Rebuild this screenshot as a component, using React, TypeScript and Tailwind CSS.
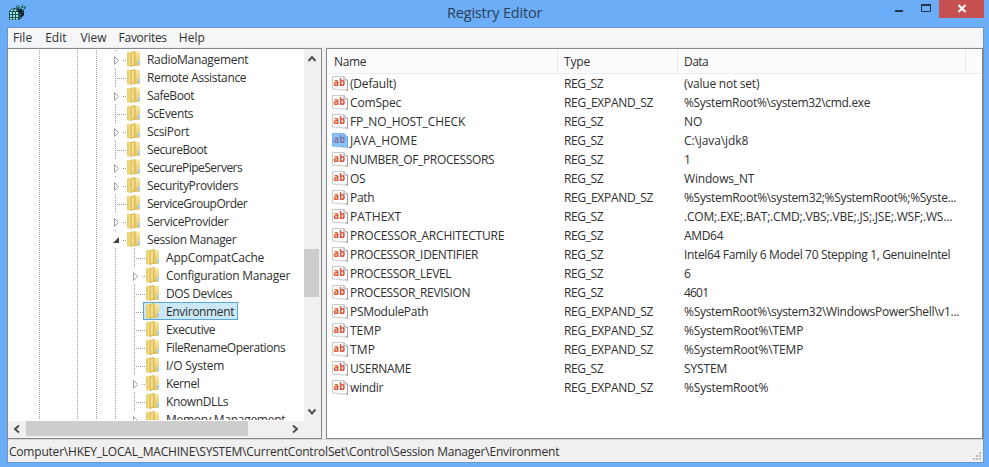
import { useLayoutEffect, useRef, useState } from "react";

type TextProps = { text: string; w?: number; className?: string };

// Text tracked so that its ink ends at w, less the last glyph's side bearing.
function Label({ text, w, className = "" }: TextProps) {
  const ref = useRef<HTMLSpanElement>(null);
  const [spacing, setSpacing] = useState(0);
  useLayoutEffect(() => {
    if (ref.current && w) {
      const natural = ref.current.getBoundingClientRect().width;
      setSpacing((w - 0.8 - natural) / text.length);
    }
  }, [text, w]);
  return (
    <span ref={ref} className={"shrink-0 whitespace-pre " + className} style={{ letterSpacing: spacing + "px" }}>
      {text}
    </span>
  );
}

type Node = { name: string; w: number; level: 1 | 2; state?: "closed" | "open"; selected?: boolean };

const nodes: Node[] = [
  { name: "RadioManagement", w: 102, level: 1, state: "closed" },
  { name: "Remote Assistance", w: 100, level: 1 },
  { name: "SafeBoot", w: 48, level: 1, state: "closed" },
  { name: "ScEvents", w: 47, level: 1 },
  { name: "ScsiPort", w: 43, level: 1, state: "closed" },
  { name: "SecureBoot", w: 61, level: 1 },
  { name: "SecurePipeServers", w: 96, level: 1, state: "closed" },
  { name: "SecurityProviders", w: 92, level: 1, state: "closed" },
  { name: "ServiceGroupOrder", w: 101, level: 1 },
  { name: "ServiceProvider", w: 82, level: 1, state: "closed" },
  { name: "Session Manager", w: 90, level: 1, state: "open" },
  { name: "AppCompatCache", w: 99, level: 2 },
  { name: "Configuration Manager", w: 125, level: 2, state: "closed" },
  { name: "DOS Devices", w: 67, level: 2 },
  { name: "Environment", w: 69, level: 2, selected: true },
  { name: "Executive", w: 50, level: 2 },
  { name: "FileRenameOperations", w: 120, level: 2 },
  { name: "I/O System", w: 59, level: 2 },
  { name: "Kernel", w: 34, level: 2, state: "closed" },
  { name: "KnownDLLs", w: 63, level: 2 },
  { name: "Memory Management", w: 120, level: 2, state: "closed" },
];

const SZ = "REG_SZ";
const EX = "REG_EXPAND_SZ";
const values: [string, number, string, string, number][] = [
  ["(Default)", 47, SZ, "(value not set)", 76],
  ["ComSpec", 52, EX, "%SystemRoot%\\system32\\cmd.exe", 187],
  ["FP_NO_HOST_CHECK", 116, SZ, "NO", 19],
  ["JAVA_HOME", 68, SZ, "C:\\java\\jdk8", 65],
  ["NUMBER_OF_PROCESSORS", 145, SZ, "1", 7],
  ["OS", 16, SZ, "Windows_NT", 71],
  ["Path", 25, EX, "%SystemRoot%\\system32;%SystemRoot%;%Syste...", 273],
  ["PATHEXT", 52, SZ, ".COM;.EXE;.BAT;.CMD;.VBS;.VBE;.JS;.JSE;.WSF;.WS...", 269],
  ["PROCESSOR_ARCHITECTURE", 155, SZ, "AMD64", 40],
  ["PROCESSOR_IDENTIFIER", 129, SZ, "Intel64 Family 6 Model 70 Stepping 1, GenuineIntel", 267],
  ["PROCESSOR_LEVEL", 102, SZ, "6", 7],
  ["PROCESSOR_REVISION", 121, SZ, "4601", 25],
  ["PSModulePath", 79, EX, "%SystemRoot%\\system32\\WindowsPowerShell\\v1...", 276],
  ["TEMP", 32, EX, "%SystemRoot%\\TEMP", 120],
  ["TMP", 26, EX, "%SystemRoot%\\TEMP", 120],
  ["USERNAME", 62, SZ, "SYSTEM", 44],
  ["windir", 34, EX, "%SystemRoot%", 85],
];

const dotted = "bg-[repeating-linear-gradient(to_bottom,#9b9b9b_0px,#9b9b9b_1px,transparent_1px,transparent_2px)]";

function Guide({ className }: { className: string }) {
  return <div className={"h-[18px] w-px shrink-0 " + dotted + " " + className} />;
}

function Folder() {
  return (
    <svg width="14" height="16" viewBox="0 0 14 16" className="shrink-0">
      <defs>
        <linearGradient id="folderFront" x1="0" x2="1">
          <stop offset="0" stopColor="#e6cb69" />
          <stop offset="1" stopColor="#f5e296" />
        </linearGradient>
        <linearGradient id="folderBack" x1="0" x2="0" y1="0" y2="1">
          <stop offset="0" stopColor="#f6e8a6" />
          <stop offset="1" stopColor="#e3c563" />
        </linearGradient>
      </defs>
      <path d="M5 .6h6.500L13 2v12.500l-.8.5H5z" fill="url(#folderBack)" />
      <path d="M0 1.500 4 .6v14.800H.6L0 14.800z" fill="url(#folderFront)" />
      <path d="M3.600 1.600 7.800 0v14L4.400 16l-.8-.6z" fill="#d0ac40" />
      <path d="M4.500 2 7.200.9v12.700l-2.700 1.500z" fill="#f3dd86" />
      <path d="M8.300 1v13.500" stroke="#dcbc58" strokeWidth=".8" />
      <path d="M11 9.500h2.200v4.800H11z" fill="#edf3f5" />
      <path d="M12 10v4" stroke="#5fa6da" strokeWidth="1" />
    </svg>
  );
}

function Connector({ state }: { state?: "closed" | "open" }) {
  return (
    <svg width="14" height="18" viewBox="0 0 14 18" className="shrink-0 overflow-visible">
      {!state && <path d="M5 .5h1M5 2.500h1M5 4.500h1M5 6.500h1M5 8.500h1M5 10.500h1M5 12.500h1M5 14.500h1M5 16.500h1M5 18.500h1" stroke="#9b9b9b" />}
      {!state && <path d="M7 10.500h10" stroke="#9b9b9b" strokeDasharray="1 1" />}
      {state && <path d="M13 10.500h4M5 .5h1" stroke="#9b9b9b" strokeDasharray="1 1" />}
      {state === "closed" && <path d="M4.500 6.500v8l4-4z" fill="#fff" stroke="#a2a2a2" />}
      {state === "open" && <path d="M9 7v6H3z" fill="#404040" />}
    </svg>
  );
}

function TreeRow({ node }: { node: Node }) {
  const box = node.selected ? "border-[#5aa7dc] bg-[#cbe8f6]" : "border-transparent";
  return (
    <div className="flex h-[18px] shrink-0 items-center">
      <Guide className="ml-[31px]" />
      <Guide className="ml-[37px]" />
      <Guide className="ml-[18px]" />
      {node.level === 2 && <Guide className="ml-[18px]" />}
      <div className="w-[13px] shrink-0" />
      <Connector state={node.state} />
      <div className={"flex h-[18px] shrink-0 items-center border pr-[3px] pl-[2px] " + box}>
        <Folder />
        <Label text={node.name} w={node.w} className="ml-[6px] pt-[2px] leading-[16px]" />
      </div>
    </div>
  );
}

function StringIcon({ selected }: { selected: boolean }) {
  return (
    <svg width="16" height="16" viewBox="0 0 16 16" className="mt-[2px] shrink-0 self-start">
      <path
        d="M.5 .5h11.500l3.500 3.500v10.500l-2-1-1.500 1-2-1-1.500.5-2-1-1.500 1-1.500-1-1.500.5-1.500-.5z"
        fill={selected ? "#8cc4fa" : "#fcfcfc"}
        stroke={selected ? "#73b0ee" : "#c9c9c9"}
      />
      <path d="M12 .5V4h3.500v10.500l-2-1" fill="none" stroke={selected ? "#6ba7e3" : "#a3a3a3"} />
      <text x="1.600" y="9.500" fontSize="10" fontWeight="700" textLength="11.500" lengthAdjust="spacingAndGlyphs" fill={selected ? "#8272a8" : "#d9502f"} fontFamily="Open Sans">
        ab
      </text>
    </svg>
  );
}

function RegistryIcon() {
  return (
    <svg width="17" height="16" viewBox="0 0 17 16">
      <path d="M0 6.500 3 3.500 8 3l5 1v8l-3 3H0z" fill="#1d4f54" />
      <path d="M1 7h2v2H1zM4 7h2v2H4zM7 7h2v2H7zM1 10h2v2H1zM4 10h2v2H4zM7 10h2v2H7zM1 13h2v1.500H1zM4 13h2v1.500H4zM7 13h2v1.500H7z" fill="#9beae6" />
      <path d="m1.500 6 1.500-1.500h1.500L3.500 6zM4.800 6l1-1.500h1.700L7 6z" fill="#b9f5ef" />
      <path d="m7 1.500 2-1.500 2 1.500L10 4H8zM12 2l2-2 3 1.500-1 2.500-3 1z" fill="#1b5159" />
      <path d="M8.500 1h1.200v1.200H8.500zM14 1h1.700v1H14zM13 2.800h2v1h-2z" fill="#7de8e6" />
      <path d="m8.500 6 3-2 1.500 2-2 1.800zM13 5.500h2V10l-4 4V9z" fill="#07191c" />
      <path d="M11.500 9v1M11.500 11.500v1M13.500 7v1" stroke="#46b4b8" />
    </svg>
  );
}

function Chevron({ d }: { d: string }) {
  return (
    <svg width="10" height="10" viewBox="0 0 10 10">
      <path d={d} fill="none" stroke="#505050" strokeWidth="2" />
    </svg>
  );
}

export default function App() {
  return (
    <div className="flex h-[467px] w-[989px] flex-col overflow-hidden bg-[#6badf6] font-['Open_Sans',sans-serif] text-[12px] text-[#2f2f2f]">
      <header className="flex h-[27px] shrink-0 items-start">
        <div className="w-[438px] pt-[5px] pl-[9px]">
          <RegistryIcon />
        </div>
        <Label text="Registry Editor" w={96} className="ml-[9px] pt-[1px] text-[14.5px] leading-[24px] text-[#2b4059]" />
        <div className="ml-auto flex h-[18px]">
          <svg width="44" height="18" viewBox="0 0 44 18">
            <path d="M0 10h8v2H0z" fill="#243548" />
            <path d="M26.500 5v6.500h9V5" fill="none" stroke="#243548" />
            <path d="M26 4h10v2H26z" fill="#243548" />
          </svg>
          <div className="mr-[5px] flex w-[45px] justify-center bg-[#c75050]">
            <svg width="10" height="18" viewBox="0 0 10 18">
              <path d="m1.500 5 7 7M8.500 5l-7 7" stroke="#fff" strokeWidth="2" />
            </svg>
          </div>
        </div>
      </header>
      <div className="mr-[5px] ml-[7px] flex h-[436px] flex-col border border-[#6898cf] bg-[#f0f0f0]">
        <nav className="flex h-[20px] shrink-0 items-center border-b border-[#ececec] bg-[#f5f6f7] pl-[5px] leading-[19px]">
          <Label text="File" w={20} />
          <Label text="Edit" w={22} className="ml-[13px]" />
          <Label text="View" w={27} className="ml-[14px]" />
          <Label text="Favorites" w={49} className="ml-[12px]" />
          <Label text="Help" w={27} className="ml-[12px]" />
        </nav>
        <main className="-mx-px flex h-[391px] shrink-0">
          <section className="flex w-[315px] flex-col border border-[#828790] bg-white">
            <div className="flex h-[372px] shrink-0">
              <div className="flex w-[296px] flex-col overflow-hidden pt-px pb-px">
                <div className="flex h-[370px] flex-col overflow-hidden">
                  {nodes.map((n) => (
                    <TreeRow key={n.name} node={n} />
                  ))}
                </div>
              </div>
              <div className="flex w-[17px] flex-col items-center bg-[#f0f0f0] pr-[2px]">
                <div className="h-[200px] pt-[5px]">
                  <Chevron d="m1.500 7 3.500-4 3.500 4" />
                </div>
                <div className="h-[48px] w-[15px] bg-[#cdcdcd]" />
                <div className="mt-auto h-[15px]">
                  <Chevron d="m1.500 3.500 3.500 4 3.500-4" />
                </div>
              </div>
            </div>
            <div className="flex h-[17px] items-start bg-[#f0f0f0]">
              <div className="flex h-[15px] w-[18px] items-center pl-[4px]">
                <Chevron d="M7 1.500 3 5l4 3.500" />
              </div>
              <div className="h-[15px] w-[222px] bg-[#cdcdcd]" />
              <div className="ml-[42px] flex h-[15px] items-center">
                <Chevron d="m3 1.500 4 3.500-4 3.500" />
              </div>
            </div>
          </section>
          <section className="ml-[4px] flex w-[658px] flex-col border border-r-2 border-[#828790] bg-white">
            <div className="flex h-[25px] shrink-0 items-center border-b border-[#e6eff7] bg-[#fcfcfc] leading-[26px]">
              <div className="flex h-full w-[231px] border-r border-[#e1ebf5] pl-[7px]">
                <Label text="Name" w={33} />
              </div>
              <div className="flex h-full w-[120px] border-r border-[#e1ebf5] pl-[6px]">
                <Label text="Type" w={27} />
              </div>
              <div className="flex h-full w-[288px] border-r border-[#e1ebf5] pl-[6px]">
                <Label text="Data" w={25} />
              </div>
            </div>
            {values.map(([name, nw, type, data, dw]) => (
              <div key={name} className="flex h-[19px] shrink-0 items-center pl-[5px] leading-[19px]">
                <StringIcon selected={name === "JAVA_HOME"} />
                <div className="ml-[2px] flex w-[214px]">
                  <Label text={name} w={nw} />
                </div>
                <div className="flex w-[120px]">
                  <Label text={type} w={type === SZ ? 40 : 90} />
                </div>
                <Label text={data} w={dw} />
              </div>
            ))}
          </section>
        </main>
        <footer className="flex h-[23px] shrink-0 items-end border-t border-[#d7d7d7]">
          <Label text="Computer\HKEY_LOCAL_MACHINE\SYSTEM\CurrentControlSet\Control\Session Manager\Environment" w={551} className="ml-px leading-[20px]" />
          <svg width="8" height="8" className="mr-[2px] mb-[2px] ml-auto">
            <path d="M6 0h2v2H6zM3 3h2v2H3zM6 3h2v2H6zM0 6h2v2H0zM3 6h2v2H3zM6 6h2v2H6z" fill="#bcbcbc" />
          </svg>
        </footer>
      </div>
    </div>
  );
}
